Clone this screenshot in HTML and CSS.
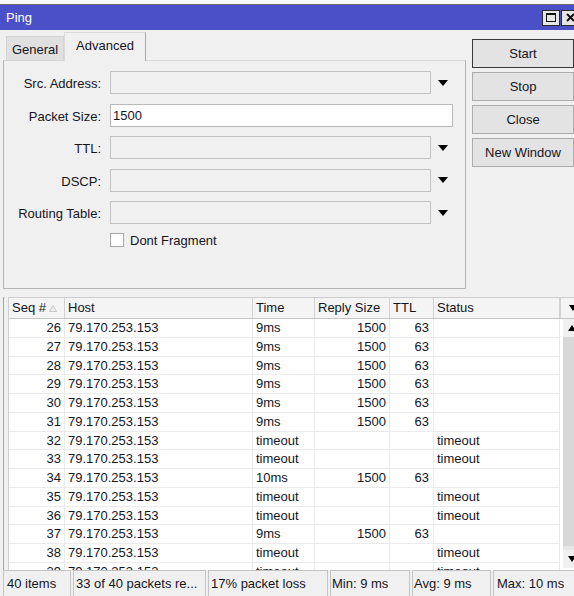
FILE: index.html
```html
<!DOCTYPE html>
<html lang="en">
<head>
    <meta charset="UTF-8">
    <title>Ping</title>
    <link rel="stylesheet" href="styles.css">
</head>
<body>
<div class="window">
    <div class="topstrip"></div>
    <div class="titlebar">
        <span class="title">Ping</span>
        <div class="wbtns">
            <span class="wbtn"><span class="sq"></span></span>
            <span class="wbtn">
                <svg width="9" height="9" viewBox="0 0 9 9"><path d="M1 1L8 8M8 1L1 8" stroke="#111" stroke-width="2"/></svg>
            </span>
        </div>
    </div>

    <div class="top">
        <div class="tabarea">
            <div class="tabs">
                <div class="tab">General</div>
                <div class="tab active">Advanced</div>
            </div>
            <div class="panel">
                <div class="form">
                    <label>Src. Address:</label>
                    <div class="combo"><div class="field"></div><span class="arrow"></span></div>
                    <label>Packet Size:</label>
                    <div class="text">1500</div>
                    <label>TTL:</label>
                    <div class="combo"><div class="field"></div><span class="arrow"></span></div>
                    <label>DSCP:</label>
                    <div class="combo"><div class="field"></div><span class="arrow"></span></div>
                    <label>Routing Table:</label>
                    <div class="combo"><div class="field"></div><span class="arrow"></span></div>
                </div>
                <div class="check"><span class="box"></span>Dont Fragment</div>
            </div>
        </div>
        <div class="buttons">
            <button class="btn default">Start</button>
            <button class="btn">Stop</button>
            <button class="btn">Close</button>
            <button class="btn">New Window</button>
        </div>
    </div>

    <div class="list">
        <div class="grid">
            <div class="head">
                <div class="c seq">Seq #
                    <svg class="sort" width="8" height="7" viewBox="0 0 8 7"><path d="M4 0.5L7.5 6.5H0.5Z" fill="none" stroke="#c4c4c4"/></svg>
                </div>
                <div class="c host">Host</div>
                <div class="c time">Time</div>
                <div class="c size">Reply Size</div>
                <div class="c ttl">TTL</div>
                <div class="c status">Status</div>
            </div>
            <div class="rows">
                <div class="row"><div class="c seq r">26</div><div class="c host">79.170.253.153</div><div class="c time">9ms</div><div class="c size r">1500</div><div class="c ttl r">63</div><div class="c status"></div></div>
                <div class="row"><div class="c seq r">27</div><div class="c host">79.170.253.153</div><div class="c time">9ms</div><div class="c size r">1500</div><div class="c ttl r">63</div><div class="c status"></div></div>
                <div class="row"><div class="c seq r">28</div><div class="c host">79.170.253.153</div><div class="c time">9ms</div><div class="c size r">1500</div><div class="c ttl r">63</div><div class="c status"></div></div>
                <div class="row"><div class="c seq r">29</div><div class="c host">79.170.253.153</div><div class="c time">9ms</div><div class="c size r">1500</div><div class="c ttl r">63</div><div class="c status"></div></div>
                <div class="row"><div class="c seq r">30</div><div class="c host">79.170.253.153</div><div class="c time">9ms</div><div class="c size r">1500</div><div class="c ttl r">63</div><div class="c status"></div></div>
                <div class="row"><div class="c seq r">31</div><div class="c host">79.170.253.153</div><div class="c time">9ms</div><div class="c size r">1500</div><div class="c ttl r">63</div><div class="c status"></div></div>
                <div class="row"><div class="c seq r">32</div><div class="c host">79.170.253.153</div><div class="c time">timeout</div><div class="c size r"></div><div class="c ttl r"></div><div class="c status">timeout</div></div>
                <div class="row"><div class="c seq r">33</div><div class="c host">79.170.253.153</div><div class="c time">timeout</div><div class="c size r"></div><div class="c ttl r"></div><div class="c status">timeout</div></div>
                <div class="row"><div class="c seq r">34</div><div class="c host">79.170.253.153</div><div class="c time">10ms</div><div class="c size r">1500</div><div class="c ttl r">63</div><div class="c status"></div></div>
                <div class="row"><div class="c seq r">35</div><div class="c host">79.170.253.153</div><div class="c time">timeout</div><div class="c size r"></div><div class="c ttl r"></div><div class="c status">timeout</div></div>
                <div class="row"><div class="c seq r">36</div><div class="c host">79.170.253.153</div><div class="c time">timeout</div><div class="c size r"></div><div class="c ttl r"></div><div class="c status">timeout</div></div>
                <div class="row"><div class="c seq r">37</div><div class="c host">79.170.253.153</div><div class="c time">9ms</div><div class="c size r">1500</div><div class="c ttl r">63</div><div class="c status"></div></div>
                <div class="row"><div class="c seq r">38</div><div class="c host">79.170.253.153</div><div class="c time">timeout</div><div class="c size r"></div><div class="c ttl r"></div><div class="c status">timeout</div></div>
                <div class="row"><div class="c seq r">39</div><div class="c host">79.170.253.153</div><div class="c time">timeout</div><div class="c size r"></div><div class="c ttl r"></div><div class="c status">timeout</div></div>
            </div>
        </div>
        <div class="scroll">
            <div class="scroll-head"><span class="tri down"></span></div>
            <div class="scroll-body">
                <div class="sbtn"><span class="tri up"></span></div>
                <div class="track"></div>
                <div class="sbtn"><span class="tri down"></span></div>
            </div>
        </div>
    </div>

    <div class="statusbar">
        <div class="seg s1">40 items</div>
        <div class="seg s2">33 of 40 packets re...</div>
        <div class="seg s3">17% packet loss</div>
        <div class="seg s4">Min: 9 ms</div>
        <div class="seg s5">Avg: 9 ms</div>
        <div class="seg s6">Max: 10 ms</div>
    </div>
</div>
</body>
</html>
```

FILE: styles.css
```css
body {
    margin: 0;
    background-color: #f0f0f0;
    font-family: "Liberation Sans", Arial, sans-serif;
    font-size: 13px;
    color: #15151f;
}
.window {
    width: 574px;
    height: 596px;
    overflow: hidden;
}
.topstrip {
    height: 4px;
    background-color: #f7f7f7;
    border-bottom: 1px solid #6a6a6a;
}
.titlebar {
    height: 25px;
    background-color: #4b4fc8;
    color: white;
    display: flex;
    align-items: center;
    padding-left: 6px;
}
.title {
    flex: 1;
}
.wbtns {
    display: flex;
    gap: 1px;
    margin-right: -5px;
}
.wbtn {
    width: 18px;
    height: 16px;
    box-sizing: border-box;
    border: 1px solid #2a2a2a;
    background-color: #e6e6e6;
    display: flex;
    align-items: center;
    justify-content: center;
}
.sq {
    width: 10px;
    height: 9px;
    box-sizing: border-box;
    border: 1px solid #111;
    border-top-width: 2px;
}

/* top part: tabs + buttons */
.top {
    display: flex;
    height: 267px;
    padding-left: 3px;
    box-sizing: border-box;
}
.tabarea {
    width: 463px;
    flex-shrink: 0;
    padding-top: 2px;
}
.tabs {
    display: flex;
    align-items: flex-end;
    height: 28px;
    padding-left: 3px;
}
.tab {
    width: 58px;
    height: 24px;
    box-sizing: border-box;
    border: 1px solid #d4d4d4;
    border-bottom: none;
    background-color: #e0e0e0;
    display: flex;
    align-items: center;
    justify-content: center;
    padding-top: 1px;
}
.tab.active {
    width: 82px;
    height: 29px;
    margin-bottom: -1px;
    background-color: #f0f0f0;
    border-color: #dadada;
    border-right-color: #a8a8a8;
    position: relative;
    z-index: 1;
    padding-top: 0;
    padding-bottom: 3px;
}
.panel {
    height: 229px;
    box-sizing: border-box;
    border: 1px solid #b4b4b4;
    border-top-color: #d6d6d6;
    padding-top: 10px;
}
.form {
    display: grid;
    grid-template-columns: 97px 343px;
    grid-auto-rows: 23px;
    column-gap: 9px;
    row-gap: 9.5px;
}
.form label {
    text-align: right;
    line-height: 25px;
}
.combo {
    display: flex;
}
.field {
    width: 321px;
    box-sizing: border-box;
    border: 1px solid #c2c2c2;
    background-color: #f0f0f0;
}
.arrow {
    flex: 1;
    display: flex;
    align-items: center;
    justify-content: center;
}
.arrow::after {
    content: "";
    border-left: 5px solid transparent;
    border-right: 5px solid transparent;
    border-top: 6px solid #000;
    margin-left: 1px;
}
.text {
    box-sizing: border-box;
    border: 1px solid #b9b9b9;
    background-color: #fff;
    padding-left: 2px;
    line-height: 22px;
}
.check {
    display: flex;
    align-items: center;
    gap: 6px;
    margin: 8px 0 0 106px;
    height: 16px;
}
.box {
    width: 14px;
    height: 14px;
    box-sizing: border-box;
    border: 1px solid #a6a6a6;
    background-color: #fff;
}
.buttons {
    display: flex;
    flex-direction: column;
    gap: 4px;
    margin: 9px 0 0 6px;
}
.btn {
    width: 102px;
    height: 29px;
    flex-shrink: 0;
    border: 1px solid #acacac;
    background-color: #e3e3e3;
    font: inherit;
    color: inherit;
    padding: 0;
}
.btn.default {
    border-color: #3a3a3a;
}

/* list */
.list {
    display: flex;
    height: 273px;
    margin-left: 3px;
    border-left: 1px solid #a3a3a3;
    padding-left: 4px;
}
.grid {
    width: 552px;
    flex-shrink: 0;
    box-sizing: border-box;
    border-left: 1px solid #cfcfcf;
    display: flex;
    flex-direction: column;
    background-color: #fff;
}
.head {
    display: flex;
    height: 22px;
    box-sizing: border-box;
    border-top: 1px solid #cdcdcd;
    border-bottom: 1px solid #c6c6c6;
    background-color: #f4f4f4;
}
.head .c {
    border-right: 1px solid #d2d2d2;
    line-height: 20px;
    padding-left: 3px;
}
.head .seq {
    display: flex;
    align-items: center;
    gap: 3px;
}
.rows {
    flex: 1;
    overflow: hidden;
}
.row {
    display: flex;
    height: 18.75px;
    box-sizing: border-box;
    border-bottom: 1px solid #ebebeb;
}
.c {
    box-sizing: border-box;
    border-right: 1px solid #ebebeb;
    padding: 0 3px;
    white-space: nowrap;
    overflow: hidden;
    line-height: 18px;
}
.r {
    text-align: right;
}
.seq { width: 56px; }
.host { width: 188px; }
.time { width: 62px; }
.size { width: 75px; }
.ttl { width: 44px; padding-right: 4px; }
.status { width: 126px; }
.scroll {
    width: 20px;
    flex-shrink: 0;
    display: flex;
    flex-direction: column;
}
.scroll-head {
    height: 22px;
    box-sizing: border-box;
    border-top: 1px solid #cdcdcd;
    border-bottom: 1px solid #c6c6c6;
    border-left: 1px solid #d2d2d2;
    background-color: #f4f4f4;
    display: flex;
    align-items: center;
    justify-content: center;
    padding-left: 4px;
}
.scroll-body {
    flex: 1;
    display: flex;
    flex-direction: column;
    border-left: 3px solid #fff;
    padding-bottom: 2px;
    background-color: #fff;
}
.sbtn {
    height: 18px;
    display: flex;
    align-items: center;
    justify-content: center;
    background-color: #f0f0f0;
}
.track {
    flex: 1;
    background-color: #d8d8d8;
    border-bottom: 4px solid #e6e6e6;
}
.tri {
    border-left: 4px solid transparent;
    border-right: 4px solid transparent;
}
.tri.down {
    border-top: 6px solid #000;
}
.tri.up {
    border-bottom: 6px solid #000;
}

/* status bar */
.statusbar {
    display: flex;
    gap: 2px;
    padding-left: 3px;
    height: 26px;
}
.seg {
    flex-shrink: 0;
    box-sizing: border-box;
    height: 26px;
    border: 1px solid #c4c4c4;
    border-bottom: none;
    padding: 0 2px;
    line-height: 25px;
    white-space: nowrap;
}
.s1 { width: 68px; padding-left: 3px; }
.s2 { width: 133px; }
.s3 { width: 120px; }
.s4 { width: 80px; padding-left: 1px; }
.s5 { width: 79px; padding-left: 1px; }
.s6 { width: 90px; padding-left: 3px; }
```
